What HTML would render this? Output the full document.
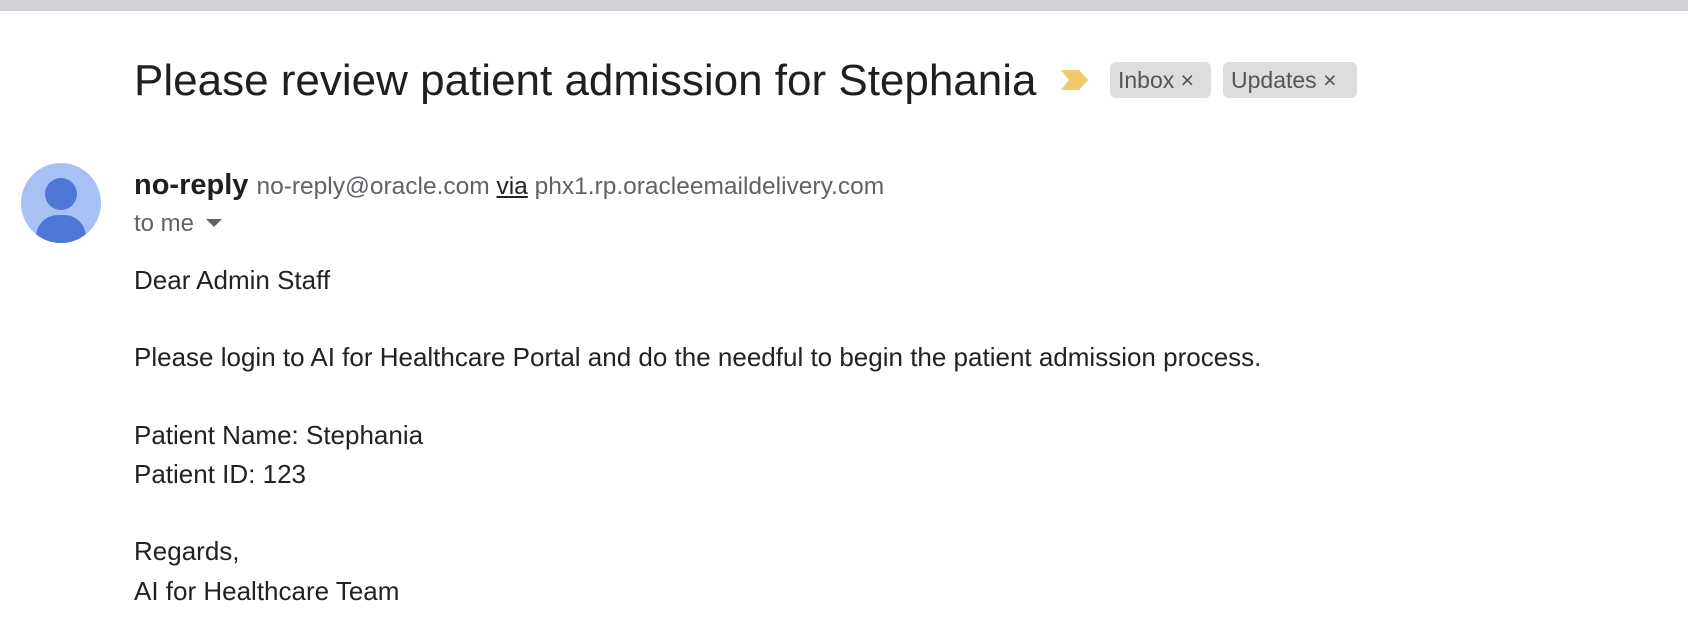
<!DOCTYPE html>
<html><head><meta charset="utf-8"><style>
body{margin:0;width:1688px;height:636px;background:#fff;font-family:"Liberation Sans",Arial,sans-serif;position:relative;overflow:hidden;color:#222}
.bar{position:absolute;left:0;top:0;width:1688px;height:11px;background:#d0d2d5}
.t{position:absolute;white-space:nowrap}
.title{left:134px;top:56px;font-size:44px;line-height:50px;color:#1f1f1f}
.chip{position:absolute;top:62px;height:36px;background:#dddddd;border-radius:6px;font-size:23px;color:#555;line-height:36px;padding:0 8px;box-sizing:border-box}
.body{font-size:26px;line-height:30px;color:#222;left:134px}
</style></head><body>
<div class="bar"></div>
<div class="t title">Please review patient admission for Stephania</div>
<svg style="position:absolute;left:1060px;top:69px" width="30" height="22"><polygon points="1,1 19,1 28,11 19,21 1,21 9,11" fill="#f0c96b"/></svg>
<div class="chip" style="left:1110px;width:101px">Inbox <span>×</span></div>
<div class="chip" style="left:1223px;width:134px">Updates <span>×</span></div>
<svg style="position:absolute;left:21px;top:163px" width="80" height="80"><defs><clipPath id="c"><circle cx="40" cy="40" r="40"/></clipPath></defs><circle cx="40" cy="40" r="40" fill="#a8c1f5"/><g clip-path="url(#c)"><circle cx="40" cy="31" r="16" fill="#4f77d8"/><rect x="15" y="52" width="50" height="44" rx="22" fill="#4f77d8"/></g></svg>
<div class="t" style="left:134px;top:168px;font-size:29px;line-height:34px"><b style="color:#1f1f1f">no-reply</b> <span style="font-size:24.5px;color:#5f6368">no-reply@oracle.com <u style="color:#222">via</u> phx1.rp.oracleemaildelivery.com</span></div>
<div class="t" style="left:134px;top:209px;font-size:24px;line-height:30px;color:#5f6368">to me</div>
<svg style="position:absolute;left:206px;top:219px" width="18" height="10"><polygon points="0,0 16,0 8,8" fill="#5f6368"/></svg>
<div class="t body" style="top:265px">Dear Admin Staff</div>
<div class="t body" style="top:342px">Please login to AI for Healthcare Portal and do the needful to begin the patient admission process.</div>
<div class="t body" style="top:420px">Patient Name: Stephania</div>
<div class="t body" style="top:459px">Patient ID: 123</div>
<div class="t body" style="top:536px">Regards,</div>
<div class="t body" style="top:576px">AI for Healthcare Team</div>
</body></html>
